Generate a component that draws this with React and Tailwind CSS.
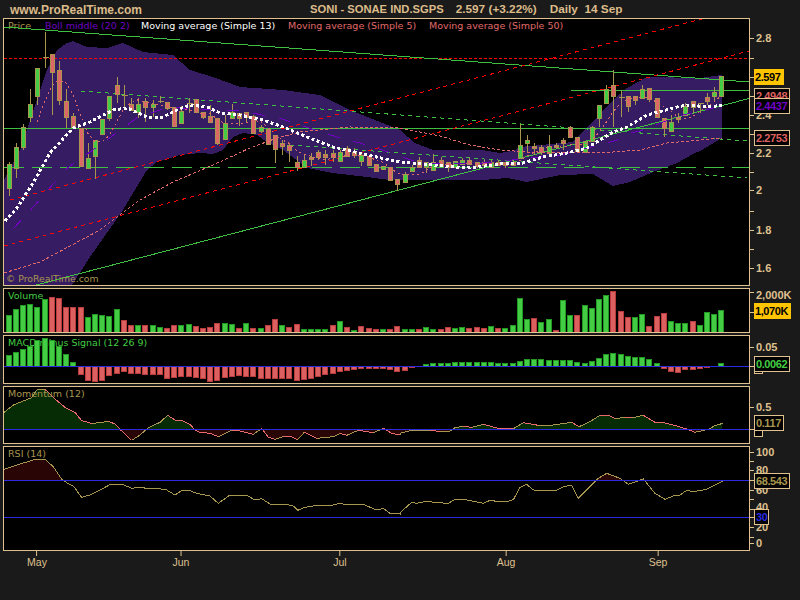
import React from "react";

const GREEN = "#3fbf3f";
const RED = "#ff0000";
const PINK = "#e06a6a";
const OLIVE = "#a8964f";
const BLUE = "#2a2ae0";
const PURPLE = "#7000c4";

const barX = (i) => Math.floor(6 + 7.2 * i);

// [body top, body bottom, wick top, wick bottom, g | r | d]
const candles = [
  [164,188,162,196,"g"],[147,168,143,178,"g"],[127,147,124,150,"g"],[104,117,89,122,"g"],[68,96,68,105,"g"],
  [57,57,32,68,"d"],[54,72,54,115,"r"],[70,100,61,105,"r"],[101,117,89,128,"r"],[116,127,113,128,"r"],
  [128,166,128,167,"r"],[158,168,143,168,"g"],[140,156,140,179,"g"],[119,134,119,134,"g"],[96,118,96,121,"g"],
  [85,94,77,103,"r"],[95,95,85,107,"d"],[104,110,98,110,"r"],[104,112,98,118,"g"],[101,107,98,122,"r"],
  [104,107,100,117,"g"],[101,101,96,103,"d"],[102,108,102,110,"r"],[107,126,107,126,"r"],[111,123,106,123,"g"],
  [103,103,98,113,"d"],[99,112,99,112,"r"],[112,117,112,119,"r"],[116,122,105,122,"r"],[118,143,118,145,"r"],
  [123,139,115,140,"g"],[112,118,104,118,"g"],[113,118,113,126,"r"],[112,117,112,122,"r"],[116,133,115,133,"r"],
  [127,131,125,133,"g"],[129,144,129,144,"r"],[135,149,135,163,"r"],[143,146,140,155,"r"],[145,150,143,162,"r"],
  [162,167,156,171,"r"],[160,167,155,167,"g"],[157,159,153,166,"r"],[152,157,150,160,"r"],[154,157,150,165,"r"],
  [153,157,150,162,"r"],[152,161,150,161,"g"],[148,156,146,156,"r"],[152,155,148,158,"r"],[155,161,153,166,"g"],
  [156,165,156,165,"r"],[164,171,164,171,"r"],[166,169,166,169,"g"],[167,180,167,180,"r"],[179,184,179,191,"r"],
  [174,182,172,182,"g"],[167,171,165,171,"g"],[160,167,157,167,"r"],[162,167,162,173,"g"],[162,170,154,171,"g"],
  [160,166,157,167,"r"],[162,167,162,172,"r"],[161,167,161,167,"g"],[160,164,158,164,"g"],[160,164,157,164,"r"],
  [162,166,162,168,"r"],[162,165,160,166,"r"],[162,167,160,168,"g"],[162,165,160,166,"r"],[162,165,162,168,"r"],
  [162,165,160,166,"r"],[145,158,124,158,"g"],[140,143,135,152,"g"],[146,148,143,155,"r"],[147,152,145,155,"r"],
  [146,153,135,153,"g"],[145,147,143,149,"r"],[140,143,138,150,"r"],[127,137,126,137,"r"],[137,151,137,151,"r"],
  [141,152,141,152,"g"],[127,141,126,141,"g"],[105,118,105,127,"g"],[89,103,85,103,"g"],[85,96,70,127,"r"],
  [97,97,90,117,"d"],[96,106,96,112,"r"],[96,100,96,105,"r"],[89,98,85,98,"g"],[88,99,88,102,"r"],
  [98,117,98,117,"r"],[118,128,118,137,"r"],[122,131,115,131,"g"],[117,119,113,123,"r"],[106,115,103,115,"g"],
  [101,107,101,113,"r"],[103,105,103,113,"d"],[97,101,93,105,"r"],[92,96,87,102,"g"],[76,96,76,96,"g"],
];

const volume = [
  ["g",17],["g",23],["g",27],["g",28],["g",25],["g",33],["r",35],["r",34],["r",25],["r",25],
  ["r",25],["g",15],["g",18],["g",17],["g",16],["g",23],["r",12],["r",7],["g",7],["r",7],
  ["g",7],["g",5],["r",4],["r",7],["g",7],["g",8],["r",6],["r",4],["r",5],["r",9],
  ["g",9],["g",8],["r",4],["g",9],["r",4],["g",4],["r",7],["r",13],["g",7],["r",5],
  ["r",8],["g",3],["g",3],["g",3],["g",3],["r",7],["g",11],["r",5],["g",2],["r",6],
  ["r",4],["r",3],["g",3],["r",3],["r",6],["g",3],["g",3],["r",3],["g",5],["g",3],
  ["r",3],["r",5],["g",4],["g",5],["r",4],["r",5],["r",4],["g",6],["r",4],["g",4],
  ["g",7],["g",34],["g",13],["r",14],["g",10],["g",13],["r",2],["g",32],["g",17],["r",17],
  ["g",27],["g",24],["g",33],["g",37],["r",41],["r",21],["r",15],["g",15],["g",18],["r",6],
  ["r",16],["r",19],["g",11],["g",9],["g",9],["r",11],["g",7],["g",20],["g",18],["g",22],
];

const macd = [
  11,14,17,20,26,28,26,20,12,4,-8,-14,-15,-14,-9,-7,-5,-7,-7,-8,
  -8,-8,-12,-11,-10,-10,-11,-12,-15,-14,-11,-10,-9,-10,-10,-12,-12,-12,-12,-12,
  -14,-13,-12,-10,-8,-7,-5,-4,-3,-2,-2,-2,-2,-3,-5,-4,-1,0,2,3,
  3,3,4,4,4,4,4,4,3,3,3,5,7,7,7,6,6,6,6,4,
  3,5,8,12,13,12,10,9,9,7,3,-2,-5,-6,-3,-3,-2,-1,0,3,
];

const bandUpper = [[4,180],[20,150],[28,127],[37,100],[47,70],[57,50],[67,43],[73,41],[87,47],[107,48],[123,43],[143,52],[173,55],[190,70],[213,77],[240,87],[283,90],[320,95],[350,110],[400,130],[415,143],[433,150],[482,150],[500,153],[515,150],[520,147],[573,142],[597,117],[613,100],[627,88],[647,77],[700,78],[722,75]];
const bandLower = [[722,138],[702,150],[693,154],[677,163],[653,172],[630,182],[613,186],[593,174],[560,175],[527,182],[507,178],[483,180],[400,180],[390,180],[367,177],[333,173],[307,168],[283,150],[267,142],[257,135],[243,133],[233,137],[223,150],[213,154],[200,153],[180,155],[157,162],[147,170],[123,210],[90,257],[72,285],[4,285]];

const ma13 = [[5,221],[17,208],[33,183],[50,153],[73,128],[90,122],[113,110],[127,108],[147,117],[163,117],[177,110],[190,105],[207,107],[220,113],[240,115],[263,120],[283,127],[307,137],[333,147],[347,150],[367,155],[400,162],[433,165],[467,168],[477,167],[500,164],[523,163],[543,157],[567,153],[587,148],[613,132],[627,127],[647,115],[677,107],[687,105],[710,107],[722,105]];
const ma50 = [[4,273],[40,262],[100,230],[140,200],[173,182],[213,165],[250,148],[277,138],[300,132],[350,127],[400,128],[440,136],[470,145],[500,150],[527,152],[600,153],[640,150],[667,143],[722,138]];
const boll = [[13,229],[35,205],[66,169],[100,145],[138,117],[170,107],[210,110],[245,111],[270,117],[282,119],[330,135],[367,145],[420,163],[483,163],[560,155],[607,143],[617,140],[630,133],[640,131],[663,122],[683,115],[713,108],[722,105]];

const momentumLeft = [[12,97],[40,75],[70,63],[95,53],[110,30],[135,28],[165,57],[195,82],[225,97],[245,122],[275,130],[300,128],[325,124],[345,132],[362,150],[395,181],[420,165],[445,143],[480,127],[503,106],[525,120],[548,122],[570,133],[585,150],[600,157],[630,160],[655,170],[695,150],[720,153],[760,163],[785,145],[805,172],[825,178],[850,170],[875,170],[892,179],[913,157],[950,175],[1000,170],[1020,160],[1040,166],[1075,151],[1120,158],[1150,145],[1175,160],[1200,165]];
const momentumRight = [[0,160],[30,152],[90,150],[120,155],[150,153],[165,143],[190,139],[215,142],[250,133],[295,145],[340,146],[370,128],[415,136],[460,135],[515,127],[537,140],[570,125],[600,106],[625,106],[645,115],[675,113],[695,114],[730,106],[765,127],[790,128],[830,138],[860,147],[885,157],[925,148],[945,137],[968,130]];
const momentum = [
  ...momentumLeft.map(([x, y]) => [x / 3, 380 + y / 3]),
  ...momentumRight.map(([x, y]) => [400 + x / 3, 380 + y / 3]),
];

const rsiTop = [[12,268],[50,255],[100,240],[135,238],[160,260],[185,298]];
const rsiLeft = [[200,38],[220,48],[245,82],[270,75],[300,60],[330,44],[370,44],[395,55],[420,52],[440,55],[470,55],[500,60],[525,75],[545,62],[570,62],[590,70],[630,78],[655,100],[690,75],[715,78],[740,76],[765,90],[785,86],[810,102],[835,105],[860,103],[880,108],[893,121],[915,112],[950,106],[1000,105],[1020,100],[1040,105],[1090,103],[1130,120],[1150,115],[1170,130],[1200,132]];
const rsiRight = [[0,128],[35,97],[50,100],[80,94],[110,98],[145,100],[165,88],[195,89],[225,95],[250,100],[270,91],[290,94],[325,94],[340,89],[360,52],[380,43],[400,60],[470,61],[490,50],[515,45],[535,85],[595,25],[620,10],[660,25],[685,43],[730,27],[765,70],[795,88],[820,78],[840,75],[860,61],[880,65],[920,58],[968,33]];
const rsi = [
  ...rsiTop.map(([x, y]) => [x / 3, 380 + y / 3]),
  ...rsiLeft.map(([x, y]) => [x / 3, 470 + y / 3]),
  ...rsiRight.map(([x, y]) => [400 + x / 3, 470 + y / 3]),
];

const pts = (list) => list.map(([x, y]) => `${x},${y}`).join(" ");
const pixelFont = { fontFamily: '"DejaVu Sans", sans-serif' };

function movingAverage() {
  const closes = candles.map((c) => (c[4] === "r" ? c[1] : c[0]));
  const out = [];
  closes.forEach((_, i) => {
    if (i < 4) return;
    const avg = closes.slice(i - 4, i + 1).reduce((a, b) => a + b, 0) / 5;
    out.push([barX(i) + 3, avg]);
  });
  return out;
}

function Chart({ top, height, children, labels, overlay, className }) {
  return (
    <div className={`relative box-border w-[747px] border border-[#dfc08f] bg-black ${className}`}>
      {labels}
      <svg
        className="relative block"
        width="745"
        height={height - 2}
        viewBox={`4 ${top + 1} 745 ${height - 2}`}
        shapeRendering="crispEdges"
      >
        {children}
      </svg>
      {overlay}
    </div>
  );
}

function Axis({ top, ticks = [], labels = [], badges = [] }) {
  return (
    <div className="relative w-[51px]">
      {ticks.map((y) => (
        <div key={y} className="absolute left-0 h-px w-[4px] bg-[#dfc08f]" style={{ top: y - top }} />
      ))}
      {labels.map(([y, text]) => (
        <span key={text} className="absolute left-[6px] text-[11px] font-bold leading-none text-[#dfc08f]" style={{ top: y - top - 5 }}>
          {text}
        </span>
      ))}
      {badges.map((b) => (
        <span
          key={b.text}
          className={`absolute left-[4px] box-border flex items-center overflow-hidden pl-[1px] text-[11px] font-bold leading-none tracking-[-0.4px] ${b.box}`}
          style={{ top: b.y - top, height: b.h, width: b.w, color: b.color }}
        >
          {b.text}
        </span>
      ))}
    </div>
  );
}

function Candle({ c, i }) {
  const x = barX(i);
  const [t, b, wt, wb, kind] = c;
  const fill = kind === "g" ? "#44cc44" : "#dd6666";
  return (
    <g>
      <line x1={x + 3.5} x2={x + 3.5} y1={wt} y2={wb} stroke={OLIVE} />
      {kind === "d" ? (
        <line x1={x + 0.5} x2={x + 6.5} y1={t + 0.5} y2={t + 0.5} stroke={OLIVE} />
      ) : (
        <rect x={x + 1.5} y={t + 0.5} width="4" height={Math.max(b - t, 1)} fill={fill} stroke={OLIVE} />
      )}
    </g>
  );
}

function ColumnBar({ x, y, h, kind }) {
  const fill = kind === "g" ? "#44cc44" : "#dd6060";
  const stroke = kind === "g" ? "#229922" : "#b83c3c";
  return <rect x={x + 0.5} y={y + 0.5} width="5" height={h} fill={fill} stroke={stroke} />;
}

function Legend({ children, className }) {
  return (
    <span className={`absolute left-[4px] top-[1px] text-[9.5px] leading-[12px] ${className}`} style={pixelFont}>
      {children}
    </span>
  );
}

export default function App() {
  const band = [...bandUpper, ...bandLower];
  const momentumArea = [[4, 429], ...momentum, [722, 429]];
  const rsiArea = [[4, 480], ...rsi, [722, 480]];

  return (
    <div
      className="h-[600px] w-[800px] overflow-hidden bg-[#1a1a1a]"
      style={{ fontFamily: '"Liberation Sans", Arial, sans-serif' }}
    >
      <header className="flex h-[18px] items-center pt-[1px] font-bold text-[#dcbc8a]">
        <span className="w-[310px] pl-[10px] text-[12px]">www.ProRealTime.com</span>
        <span className="text-[11.2px]">SONI - SONAE IND.SGPS</span>
        <span className="ml-[12px] text-[11.8px]">2.597 (+3.22%)</span>
        <span className="ml-[13px] whitespace-pre text-[11.8px]">Daily  14 Sep</span>
      </header>

      <div className="flex flex-col gap-[2px] pl-[3px]">
        <div className="flex">
          <Chart
            top={18}
            height={268}
            className="h-[268px]"
            labels={
              <div className="absolute left-[4px] top-[1px] flex gap-[13px] whitespace-nowrap text-[9.5px] leading-[12px]" style={pixelFont}>
                <span className="w-[24px] text-[#a8964f]">Price</span>
                <span className="w-[83px] text-[#7000c4]">Boll middle (20 2)</span>
                <span className="w-[134px] text-white">Moving average (Simple 13)</span>
                <span className="w-[128px] text-[#e06a6a]">Moving average (Simple 5)</span>
                <span className="text-[#e06a6a]">Moving average (Simple 50)</span>
              </div>
            }
            overlay={
              <span className="absolute bottom-0 left-[2px] text-[9.3px] leading-[12px] text-[#a8964f]" style={pixelFont}>
                © ProRealTime.com
              </span>
            }
          >
            <polygon points={pts(band)} fill="#361c63" />
            {/* horizontal levels */}
            <line x1="4" x2="749" y1="128.5" y2="128.5" stroke={GREEN} />
            <line x1="571" x2="749" y1="90.5" y2="90.5" stroke={GREEN} />
            <line x1="4" x2="749" y1="167.5" y2="167.5" stroke={GREEN} strokeDasharray="20 8" />
            <line x1="4" x2="749" y1="58.5" y2="58.5" stroke={RED} strokeDasharray="3 2" />
            {/* channels */}
            <line x1="4" y1="27" x2="749" y2="82" stroke={GREEN} />
            <line x1="36" y1="285" x2="749" y2="98.5" stroke={GREEN} />
            <line x1="81" y1="91" x2="747" y2="141" stroke={GREEN} strokeDasharray="4 4" />
            <line x1="290" y1="145" x2="747" y2="178" stroke={GREEN} strokeDasharray="4 4" />
            <line x1="10" y1="200" x2="717" y2="15" stroke={RED} strokeDasharray="4 4" />
            <line x1="4" y1="246" x2="749" y2="51" stroke={RED} strokeDasharray="4 4" />
            {candles.map((c, i) => (
              <Candle key={i} c={c} i={i} />
            ))}
            <polyline points={pts(ma50)} fill="none" stroke={PINK} strokeDasharray="3 2" />
            <polyline points={pts(movingAverage())} fill="none" stroke={PINK} strokeDasharray="2 3" />
            <polyline points={pts(boll)} fill="none" stroke={PURPLE} strokeDasharray="12 14" />
            <polyline points={pts(ma13)} fill="none" stroke="#ffffff" strokeWidth="3" strokeDasharray="3 2.5" />
          </Chart>
          <Axis
            top={18}
            ticks={[38, 58, 77, 96, 115, 134, 153, 172, 190, 211, 230, 249, 268]}
            labels={[[38, "2.8"], [115, "2.4"], [153, "2.2"], [190, "2"], [230, "1.8"], [268, "1.6"]]}
            badges={[
              { text: "2.597", y: 69, h: 16, w: 30, color: "#000", box: "bg-[#ffc400]" },
              { text: "2.4948", y: 88, h: 16, w: 36, color: "#dd6060", box: "border border-[#dfc08f] bg-black" },
              { text: "2.4437", y: 98, h: 16, w: 36, color: PURPLE, box: "border border-[#dfc08f] bg-black" },
              { text: "2.2753", y: 130, h: 16, w: 36, color: "#dd6060", box: "border border-[#dfc08f] bg-black" },
            ]}
          />
        </div>

        <div className="flex">
          <Chart
            top={288}
            height={45}
            className="h-[45px]"
            labels={<Legend className="text-[#44cc44]">Volume</Legend>}
          >
            {volume.map(([kind, v], i) => (
              <ColumnBar key={i} x={barX(i)} y={332 - v} h={v} kind={kind} />
            ))}
          </Chart>
          <Axis
            top={288}
            ticks={[292, 312]}
            labels={[[295, "2,000K"]]}
            badges={[{ text: "1,070K", y: 303, h: 16, w: 37, color: "#000", box: "bg-[#ffc400]" }]}
          />
        </div>

        <div className="flex">
          <Chart
            top={335}
            height={49}
            className="h-[49px]"
            labels={<Legend className="text-[#44cc44]">MACD minus Signal (12 26 9)</Legend>}
          >
            {macd.map((v, i) =>
              v === 0 ? null : (
                <ColumnBar key={i} x={barX(i)} y={v > 0 ? 366 - v : 366} h={Math.abs(v)} kind={v > 0 ? "g" : "r"} />
              )
            )}
            <line x1="4" x2="749" y1="366.5" y2="366.5" stroke={BLUE} />
          </Chart>
          <Axis
            top={335}
            ticks={[347, 366]}
            labels={[[347, "0.05"]]}
            badges={[
              { text: "", y: 366, h: 8, w: 9, color: "#000", box: "border border-[#dfc08f] bg-black" },
              { text: "0.0062", y: 356, h: 16, w: 36, color: "#44cc44", box: "border border-[#dfc08f] bg-black" },
            ]}
          />
        </div>

        <div className="flex">
          <Chart
            top={386}
            height={58}
            className="h-[58px]"
            overlay={<Legend className="text-[#a8964f]">Momentum (12)</Legend>}
          >
            <defs>
              <clipPath id="aboveZero">
                <rect x="4" y="386" width="745" height="43" />
              </clipPath>
              <clipPath id="belowZero">
                <rect x="4" y="429" width="745" height="14" />
              </clipPath>
              <clipPath id="above70">
                <rect x="4" y="446" width="745" height="34" />
              </clipPath>
            </defs>
            <polygon points={pts(momentumArea)} fill="#062c06" clipPath="url(#aboveZero)" />
            <polygon points={pts(momentumArea)} fill="#2a0505" clipPath="url(#belowZero)" />
            {momentum.slice(1).map(([x, y], i) => {
              const [px, py] = momentum[i];
              return <line key={i} x1={px} y1={py} x2={x} y2={y} stroke={y < py ? OLIVE : "#e86a6a"} />;
            })}
            <line x1="4" x2="749" y1="429.5" y2="429.5" stroke={BLUE} />
          </Chart>
          <Axis
            top={386}
            ticks={[407, 429]}
            labels={[[407, "0.5"]]}
            badges={[
              { text: "", y: 427, h: 10, w: 9, color: "#000", box: "border border-[#dfc08f] bg-black" },
              { text: "0.117", y: 415, h: 16, w: 30, color: OLIVE, box: "border border-[#dfc08f] bg-black" },
            ]}
          />
        </div>

        <div className="flex">
          <Chart
            top={446}
            height={105}
            className="h-[105px]"
            overlay={<Legend className="text-[#a8964f]">RSI (14)</Legend>}
          >
            <polygon points={pts(rsiArea)} fill="#2a0505" clipPath="url(#above70)" />
            <polyline points={pts(rsi)} fill="none" stroke={OLIVE} />
            <line x1="4" x2="749" y1="480.5" y2="480.5" stroke={BLUE} />
            <line x1="4" x2="749" y1="517.5" y2="517.5" stroke={BLUE} />
          </Chart>
          <Axis
            top={446}
            ticks={[452, 461, 470, 480, 490, 499, 509, 517, 527, 537, 543]}
            labels={[[452, "100"], [470, "80"], [490, "60"], [507, "40"], [527, "20"], [543, "0"]]}
            badges={[
              { text: "68.543", y: 473, h: 16, w: 36, color: OLIVE, box: "border border-[#dfc08f] bg-black" },
              { text: "30", y: 509, h: 16, w: 15, color: BLUE, box: "border border-[#dfc08f] bg-black" },
            ]}
          />
        </div>

        <div className="relative -mt-[2px] h-[30px] w-[747px]">
          {[[37, "May"], [181, "Jun"], [340, "Jul"], [506, "Aug"], [658, "Sep"]].map(([x, text]) => (
            <div key={text} className="absolute top-0 flex -translate-x-1/2 flex-col items-center" style={{ left: x - 3 }}>
              <div className="h-[5px] w-px bg-[#dfc08f]" />
              <span className="text-[10.5px] leading-[12px] text-[#dfc08f]">{text}</span>
            </div>
          ))}
        </div>
      </div>
    </div>
  );
}
